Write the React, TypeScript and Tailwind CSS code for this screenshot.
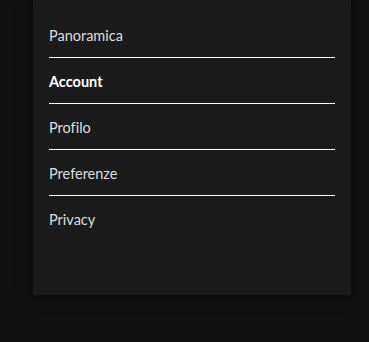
import React from "react";

const items = [
  { label: "Panoramica", active: false },
  { label: "Account", active: true },
  { label: "Profilo", active: false },
  { label: "Preferenze", active: false },
  { label: "Privacy", active: false },
];

export default function App() {
  return (
    <div className="min-h-[342px] w-full bg-[#111111] pl-[33px] pr-[18px] font-['Lato',sans-serif] [font-variant-ligatures:none]">
      <nav className="h-[295px] bg-[#1b1b1b] px-4 pt-3 shadow-[0_0_16px_rgba(0,0,0,0.35)]">
        <ul>
          {items.map((item, i) => (
            <li
              key={item.label}
              className={`pt-[14px] pb-[11px] text-[14.5px] leading-5 ${
                i < items.length - 1 ? "border-b border-white" : ""
              } ${item.active ? "font-bold text-white" : "font-normal text-[#dedede]"}`}
            >
              {item.label}
            </li>
          ))}
        </ul>
      </nav>
    </div>
  );
}
